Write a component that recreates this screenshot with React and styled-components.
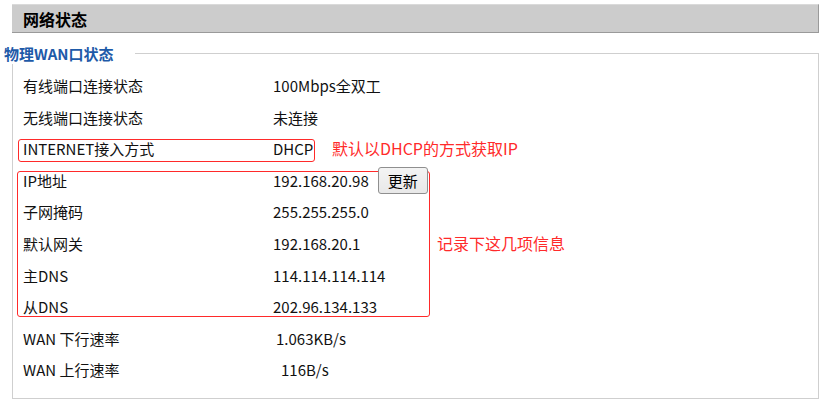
import React from 'react';
import styled, { createGlobalStyle } from 'styled-components';

const GlobalStyle = createGlobalStyle`
  body {
    margin: 0;
    background: #fff;
    font-family: "Noto Sans CJK SC", "Liberation Sans", sans-serif;
    color: #111;
  }
`;

const Page = styled.div`
  position: relative;
  padding: 4px 2px 0 4px;
  width: 821px;
  height: 402px;
  box-sizing: border-box;
  overflow: hidden;
`;

const TitleBar = styled.div`
  margin-left: 8px;
  height: 27px;
  background: #cccccc;
  border-top: 1px solid #dadada;
  border-right: 1px solid #9a9a9a;
  border-bottom: 1px solid #9a9a9a;
  padding-left: 11px;
  display: flex;
  align-items: center;
  font-size: 16px;
  font-weight: bold;
  color: #000;
`;

const GroupHead = styled.div`
  margin-top: 11px;
  height: 20px;
  display: flex;
`;

const GroupTitle = styled.span`
  padding-right: 21px;
  font-size: 15px;
  line-height: 20px;
  font-weight: bold;
  color: #1e5aa8;
`;

const GroupLine = styled.div`
  flex: 1;
  align-self: flex-end;
  height: 10px;
  border-top: 1px solid #cfcfcf;
  border-right: 1px solid #cfcfcf;
`;

const GroupBody = styled.div`
  margin-left: 8px;
  padding: 6px 0 13px 10px;
  border: 1px solid #cfcfcf;
  border-top: none;
`;

const Row = styled.div`
  display: grid;
  grid-template-columns: 250px 1fr;
  align-items: center;
  height: 31.56px;
  font-size: 15px;
`;

const Value = styled.div`
  display: flex;
  align-items: center;
  gap: 9px;
  padding-left: ${(p) => p.$indent || 0}px;
`;

const RefreshButton = styled.button`
  height: 27px;
  padding: 0 9px;
  font-family: inherit;
  font-size: 15px;
  color: #000;
  background: linear-gradient(#f4f4f4, #e8e8e8);
  border: 1px solid #8f8f8f;
  border-radius: 3px;
  position: relative;
  z-index: 2;
`;

const Mark = styled.div`
  position: absolute;
  left: ${(p) => p.$x}px;
  top: ${(p) => p.$y}px;
  width: ${(p) => p.$w}px;
  height: ${(p) => p.$h}px;
  box-sizing: border-box;
  border: 1px solid #ff2a2a;
  border-radius: 3px;
  pointer-events: none;
  z-index: 1;
`;

const Note = styled.div`
  position: absolute;
  left: ${(p) => p.$x}px;
  top: ${(p) => p.$y}px;
  font-size: 16px;
  line-height: 20px;
  color: #ff2a2a;
  white-space: nowrap;
`;

const rows = [
  { label: '有线端口连接状态', value: '100Mbps全双工' },
  { label: '无线端口连接状态', value: '未连接' },
  { label: 'INTERNET接入方式', value: 'DHCP' },
  { label: 'IP地址', value: '192.168.20.98', refresh: true },
  { label: '子网掩码', value: '255.255.255.0' },
  { label: '默认网关', value: '192.168.20.1' },
  { label: '主DNS', value: '114.114.114.114' },
  { label: '从DNS', value: '202.96.134.133' },
  { label: 'WAN 下行速率', value: '1.063KB/s', indent: 3 },
  { label: 'WAN 上行速率', value: '116B/s', indent: 8 },
];

const App = () => (
  <>
    <GlobalStyle />
    <Page>
      <TitleBar>网络状态</TitleBar>
      <GroupHead>
        <GroupTitle>物理WAN口状态</GroupTitle>
        <GroupLine />
      </GroupHead>
      <GroupBody>
        {rows.map((r) => (
          <Row key={r.label}>
            <span>{r.label}</span>
            <Value $indent={r.indent}>
              <span>{r.value}</span>
              {r.refresh && <RefreshButton type="button">更新</RefreshButton>}
            </Value>
          </Row>
        ))}
      </GroupBody>

      {/* red annotation marks drawn over the form */}
      <Mark $x={18} $y={139} $w={297} $h={23} />
      <Mark $x={17} $y={171} $w={413} $h={146} />
      <Note $x={332} $y={138}>默认以DHCP的方式获取IP</Note>
      <Note $x={437} $y={233}>记录下这几项信息</Note>
    </Page>
  </>
);

export default App;
